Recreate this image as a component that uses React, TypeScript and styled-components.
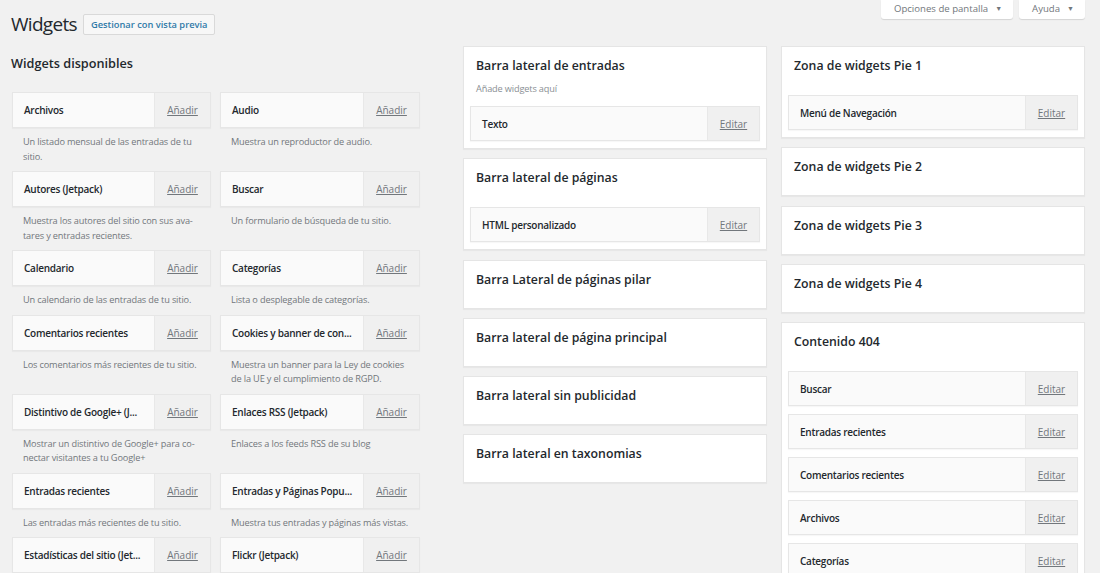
import React, { FC } from 'react';
import styled, { createGlobalStyle } from 'styled-components';

interface IAvailable {
  title: string;
  desc: string;
}

interface ISidebar {
  title: string;
  description?: string;
  widgets: string[];
}

const available: IAvailable[] = [
  { title: 'Archivos', desc: 'Un listado mensual de las entradas de tu sitio.' },
  { title: 'Audio', desc: 'Muestra un reproductor de audio.' },
  { title: 'Autores (Jetpack)', desc: 'Muestra los autores del sitio con sus ava\u00ADtares y entradas recientes.' },
  { title: 'Buscar', desc: 'Un formulario de búsqueda de tu sitio.' },
  { title: 'Calendario', desc: 'Un calendario de las entradas de tu sitio.' },
  { title: 'Categorías', desc: 'Lista o desplegable de categorías.' },
  { title: 'Comentarios recientes', desc: 'Los comentarios más recientes de tu sitio.' },
  { title: 'Cookies y banner de con...', desc: 'Muestra un banner para la Ley de cookies de la UE y el cumplimiento de RGPD.' },
  { title: 'Distintivo de Google+ (J...', desc: 'Mostrar un distintivo de Google+ para co\u00ADnectar visitantes a tu Google+' },
  { title: 'Enlaces RSS (Jetpack)', desc: 'Enlaces a los feeds RSS de su blog' },
  { title: 'Entradas recientes', desc: 'Las entradas más recientes de tu sitio.' },
  { title: 'Entradas y Páginas Popu...', desc: 'Muestra tus entradas y páginas más vistas.' },
  { title: 'Estadísticas del sitio (Jet...', desc: '' },
  { title: 'Flickr (Jetpack)', desc: '' },
];

const middle: ISidebar[] = [
  { title: 'Barra lateral de entradas', description: 'Añade widgets aquí', widgets: ['Texto'] },
  { title: 'Barra lateral de páginas', widgets: ['HTML personalizado'] },
  { title: 'Barra Lateral de páginas pilar', widgets: [] },
  { title: 'Barra lateral de página principal', widgets: [] },
  { title: 'Barra lateral sin publicidad', widgets: [] },
  { title: 'Barra lateral en taxonomias', widgets: [] },
];

const right: ISidebar[] = [
  { title: 'Zona de widgets Pie 1', widgets: ['Menú de Navegación'] },
  { title: 'Zona de widgets Pie 2', widgets: [] },
  { title: 'Zona de widgets Pie 3', widgets: [] },
  { title: 'Zona de widgets Pie 4', widgets: [] },
  {
    title: 'Contenido 404',
    widgets: ['Buscar', 'Entradas recientes', 'Comentarios recientes', 'Archivos', 'Categorías'],
  },
];

const GlobalStyle = createGlobalStyle`
  html, body {
    margin: 0;
    background: #f1f1f1;
    font-family: "Open Sans", "Noto Sans", sans-serif;
    color: #23282d;
    overflow: hidden;
  }
`;

const Page = styled.div`
  padding: 0 15px 0 11px;
  height: 573px;
  overflow: hidden;
`;

const Header = styled.div`
  display: flex;
  justify-content: space-between;
  align-items: flex-start;
  height: 46px;
`;

const TitleGroup = styled.div`
  display: flex;
  align-items: center;
  gap: 6px;
  padding-top: 13px;
`;

const PageTitle = styled.h1`
  margin: 0;
  font-size: 19px;
  letter-spacing: -0.7px;
  font-weight: 400;
  line-height: 22px;
  color: #23282d;
`;

const PreviewButton = styled.a`
  display: inline-block;
  border: 1px solid #d9d9d9;
  background: #f7f7f7;
  color: #2f7aa8;
  font-size: 9.3px;
  font-weight: 600;
  line-height: 19px;
  padding: 0 7px;
  border-radius: 2px;
`;

const ScreenMeta = styled.div`
  display: flex;
  gap: 6px;
`;

const ScreenTab = styled.div`
  background: #fff;
  box-shadow: 0 1px 1px rgba(0, 0, 0, 0.12);
  height: 19px;
  line-height: 18px;
  padding: 0 11px 0 13px;
  font-size: 9.6px;
  color: #72777c;
  border-radius: 0 0 3px 3px;

  span {
    font-size: 7px;
    margin-left: 7px;
    vertical-align: 1px;
  }
`;

const Main = styled.div`
  display: flex;
  align-items: flex-start;
  padding-left: 1px;
`;

const AvailableColumn = styled.div`
  width: 409px;
  margin-right: 42px;
`;

const Heading = styled.h2`
  margin: 0 0 21px -1px;
  padding-top: 9px;
  font-size: 12.7px;
  font-weight: 600;
  line-height: 16px;
`;

const AvailableGrid = styled.div`
  display: grid;
  grid-template-columns: 199px 200px;
  column-gap: 9px;
  align-items: start;
`;

const WidgetBar = styled.div<{ $height: number }>`
  display: flex;
  height: ${p => p.$height}px;
  box-sizing: border-box;
  border: 1px solid #e6e6e6;
  box-shadow: 0 1px 1px rgba(0, 0, 0, 0.03);
  background: #fafafa;
`;

const WidgetTitle = styled.div`
  flex: 1;
  display: flex;
  align-items: center;
  padding-left: 11px;
  font-size: 10px;
  letter-spacing: -0.25px;
  font-weight: 600;
  color: #23282d;
  white-space: nowrap;
  overflow: hidden;
`;

const WidgetAction = styled.div<{ $width: number }>`
  width: ${p => p.$width}px;
  flex-shrink: 0;
  display: flex;
  align-items: center;
  justify-content: center;
  background: #f0f0f0;
  border-left: 1px solid #e8e8e8;
  font-size: 10px;
  color: #72777c;
  text-decoration: underline;
`;

const Description = styled.p`
  margin: 0;
  padding: 7px 6px 7px 11px;
  font-size: 9.2px;
  letter-spacing: -0.15px;
  line-height: 14.5px;
  color: #72777c;
  hyphens: manual;
`;

const SidebarColumn = styled.div`
  width: 304px;
  margin-right: 14px;
  display: flex;
  flex-direction: column;
  gap: 9.3px;

  &:last-child {
    margin-right: 0;
  }
`;

const SidebarCard = styled.div`
  background: #fff;
  border: 1px solid #e5e5e5;
  box-shadow: 0 1px 1px rgba(0, 0, 0, 0.04);
`;

const SidebarHead = styled.div`
  padding: 10px 12px 0;
`;

const SidebarTitle = styled.h3`
  margin: 0;
  font-size: 12.3px;
  font-weight: 600;
  line-height: 18px;
  color: #23282d;
`;

const SidebarDesc = styled.p`
  margin: 7px 0 0;
  font-size: 9.2px;
  letter-spacing: -0.15px;
  line-height: 14px;
  color: #8a8f94;
`;

const SidebarBody = styled.div<{ $tight: boolean; $filled: boolean }>`
  display: flex;
  flex-direction: column;
  gap: 8px;
  padding: ${p => (p.$tight ? 10 : p.$filled ? 20 : 19)}px 6px ${p => (p.$filled ? 7 : 0)}px;
`;

const AvailableWidget: FC<IAvailable> = ({ title, desc }) => (
  <div>
    <WidgetBar $height={36}>
      <WidgetTitle>{title}</WidgetTitle>
      <WidgetAction $width={55}>Añadir</WidgetAction>
    </WidgetBar>
    {desc && <Description>{desc}</Description>}
  </div>
);

const Sidebar: FC<ISidebar> = ({ title, description, widgets }) => (
  <SidebarCard>
    <SidebarHead>
      <SidebarTitle>{title}</SidebarTitle>
      {description && <SidebarDesc>{description}</SidebarDesc>}
    </SidebarHead>
    <SidebarBody $tight={!!description} $filled={widgets.length > 0}>
      {widgets.map(w => (
        <WidgetBar key={w} $height={35}>
          <WidgetTitle>{w}</WidgetTitle>
          <WidgetAction $width={51}>Editar</WidgetAction>
        </WidgetBar>
      ))}
    </SidebarBody>
  </SidebarCard>
);

const App: FC = () => (
  <>
    <GlobalStyle />
    <Page>
      <Header>
        <TitleGroup>
          <PageTitle>Widgets</PageTitle>
          <PreviewButton>Gestionar con vista previa</PreviewButton>
        </TitleGroup>
        <ScreenMeta>
          <ScreenTab>
            Opciones de pantalla<span>▼</span>
          </ScreenTab>
          <ScreenTab>
            Ayuda<span>▼</span>
          </ScreenTab>
        </ScreenMeta>
      </Header>
      <Main>
        <AvailableColumn>
          <Heading>Widgets disponibles</Heading>
          <AvailableGrid>
            {available.map(w => (
              <AvailableWidget key={w.title} {...w} />
            ))}
          </AvailableGrid>
        </AvailableColumn>
        <SidebarColumn>
          {middle.map(s => (
            <Sidebar key={s.title} {...s} />
          ))}
        </SidebarColumn>
        <SidebarColumn>
          {right.map(s => (
            <Sidebar key={s.title} {...s} />
          ))}
        </SidebarColumn>
      </Main>
    </Page>
  </>
);

export default App;
